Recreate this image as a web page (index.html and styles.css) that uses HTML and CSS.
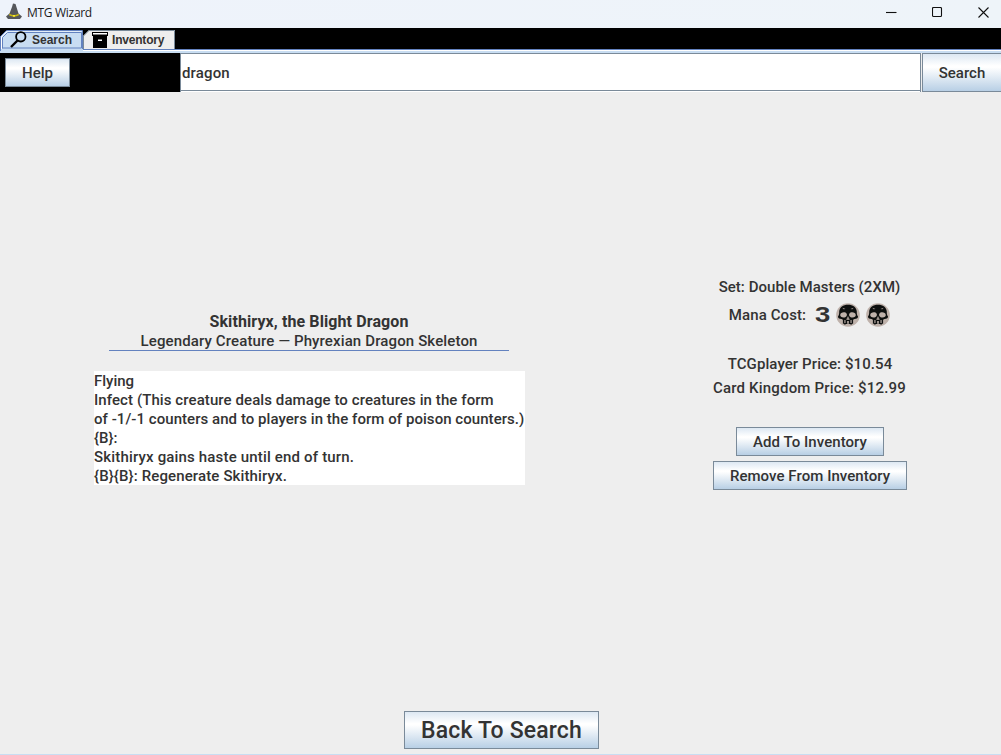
FILE: index.html
```html
<!DOCTYPE html>
<html lang="en">
<head>
<meta charset="utf-8">
<title>MTG Wizard</title>
<link rel="stylesheet" href="styles.css">
</head>
<body>
<svg class="defs" aria-hidden="true">
  <symbol id="skull" viewBox="0 0 24 24">
    <circle cx="12" cy="12" r="11.8" fill="#beb1aa"/>
    <path d="M12 1.800C7 1.800 3.600 4.500 3.200 8.500c0 1.800.1 3.200-1.200 5-.1 1.300.7 2 2.100 2.200 1.900.2 2.800.6 2.800 1.600v3.400h1.300l.5 1.200 1.200-1h4.200l1.200 1 .5-1.200h1.300v-3.400c0-1 .9-1.400 2.800-1.600 1.400-.2 2.200-.9 2.100-2.200-1.300-1.800-1.200-3.200-1.200-5C20.400 4.500 17 1.800 12 1.800z" fill="#0d0f0f"/>
    <path d="M4.200 12c0-2.700 4.700-3.600 6.300-1.600 1.300 1.900-.5 4-2.800 4.100-2.100.1-3.500-.9-3.500-2.500zM19.800 12c0-2.700-4.700-3.600-6.300-1.600-1.300 1.900.5 4 2.800 4.100 2.100.1 3.500-.9 3.500-2.500zM11.800 13l-1.500 3.700 1.500.3zM12.200 13l1.500 3.700-1.500.3zM8.400 17h1.100v3H8.400zM11.200 18h1.600v2.800h-1.600zM14.500 17h1.100v3h-1.100zM6.300 4.700l3.200 1.300-1.800.2zM17.700 4.700L14.500 6l1.800.2z" fill="#beb1aa"/>
  </symbol>
</svg>
<div class="window">
  <header class="titlebar">
    <svg class="hat" width="16" height="17" viewBox="0 0 16 17">
      <path d="M7 .5L9.500 1l3 9.500 3.500 3-2 2.500H2l-2-2.500 3.500-3L6 4z" fill="#55575b"/>
      <path d="M3.500 10.800q4.500 2.400 9 0l.5 1.500q-5 2.800-10 0z" fill="#c8b815"/>
      <path d="M7 12h2v1.700H7z" fill="#f5e82a"/>
    </svg>
    <span class="title">MTG Wizard</span>
    <div class="controls">
      <svg width="11" height="11" viewBox="0 0 11 11"><path d="M0 5.500h10.500"/></svg>
      <svg width="11" height="11" viewBox="0 0 11 11"><rect x=".5" y=".5" width="9" height="9" rx="1"/></svg>
      <svg width="11" height="11" viewBox="0 0 11 11"><path d="M.5.5l10 10M10.500.5l-10 10"/></svg>
    </div>
  </header>
  <nav class="tabs">
    <div class="tab search-tab">
      <svg class="tab-bg" width="83" height="21" viewBox="0 0 83 21"><path d="M0 21V7l6-6h77v20z" fill="#c8ddf2"/><path d="M.5 21V6.500l6-6H82.500V19" fill="none" stroke="#6382bf"/><path d="M1.500 19V7l5-5H81" fill="none" stroke="#fff"/><path d="M2.500 18.500V7.500l5-5h74v15.500H2.500" fill="none" stroke="#6382bf"/></svg>
      <svg class="magnifier" width="17" height="17" viewBox="0 0 17 17"><circle cx="10.800" cy="5.800" r="4.700" fill="none" stroke="#000" stroke-width="1.800"/><path d="M7.500 9.500L1 16" fill="none" stroke="#000" stroke-width="2.400"/></svg>
      <span class="tab-text t-search">Search</span>
    </div>
    <div class="tab inventory-tab">
      <svg class="tab-bg" width="92" height="19" viewBox="0 0 92 19"><path d="M0 19V6l6-6h86v19z" fill="#eee"/><path d="M.5 19V6l5.500-5.500h85.500V19" fill="none" stroke="#7a8a99"/></svg>
      <svg class="archive" width="16" height="16" viewBox="0 0 16 16"><path d="M0 0h16v4H0zM1 4h14v12H1z"/><path d="M1 1h14v1.500H1zM6 7.500h4V9H6z" fill="#fff"/></svg>
      <span class="tab-text t-inventory">Inventory</span>
    </div>
  </nav>
  <div class="toolbar">
    <div class="help-wrap"><button class="btn help"><span class="t-help">Help</span></button></div>
    <div class="field"><span class="t-dragon">dragon</span></div>
    <button class="btn go"><span class="t-go">Search</span></button>
  </div>
  <main class="content">
    <section class="card">
      <div class="card-head">
        <div class="name">Skithiryx, the Blight Dragon</div>
        <div class="type">Legendary Creature — Phyrexian Dragon Skeleton</div>
      </div>
      <div class="rules">
        <div><span class="r1">Flying</span></div>
        <div><span class="r2">Infect (This creature deals damage to creatures in the form</span></div>
        <div><span class="r3">of -1/-1 counters and to players in the form of poison counters.)</span></div>
        <div><span class="r4">{B}:</span></div>
        <div><span class="r5">Skithiryx gains haste until end of turn.</span></div>
        <div><span class="r6">{B}{B}: Regenerate Skithiryx.</span></div>
      </div>
    </section>
    <aside class="details">
      <div class="set">Set: Double Masters (2XM)</div>
      <div class="mana"><span class="mana-label">Mana Cost:</span><span class="three">3</span><svg class="pip" width="24" height="24"><use href="#skull"/></svg><svg class="pip" width="24" height="24"><use href="#skull"/></svg></div>
      <div class="tcg">TCGplayer Price: $10.54</div>
      <div class="kingdom">Card Kingdom Price: $12.99</div>
      <button class="btn add"><span class="t-add">Add To Inventory</span></button>
      <button class="btn remove"><span class="t-remove">Remove From Inventory</span></button>
    </aside>
  </main>
  <footer class="footer"><button class="btn back"><span class="t-back">Back To Search</span></button></footer>
</div>
</body>
</html>
```
FILE: styles.css
```css
* { box-sizing: border-box; }
body { margin: 0; background: #eee; }
.defs { position: absolute; width: 0; height: 0; }
.window {
  width: 1001px; height: 755px; display: flex; flex-direction: column; overflow: hidden;
  background: #eee; color: #333; border-bottom: 1px solid #c8ddf2;
  font: 500 15px/19px Roboto, "Liberation Sans", sans-serif; white-space: nowrap;
}
.titlebar { height: 28px; flex: none; display: flex; align-items: center; padding: 0 12px 0 6px; background: linear-gradient(90deg, #eef3fb, #eef4f9); }
.hat { margin-top: -5px; }
.title { margin: -3px auto 0 5px; color: #1b1b1b; font: 12px "Open Sans", sans-serif; letter-spacing: -.3px; }
.controls { display: flex; gap: 35px; margin-top: -4px; }
.controls svg { fill: none; stroke: #111; stroke-width: 1.100; }
.tabs { height: 25px; flex: none; display: flex; align-items: flex-start; padding-top: 2px; background: linear-gradient(#000 21px, #6382bf 21px 22px, #fff 22px 23px, #c8ddf2 23px); }
.tab { position: relative; display: flex; align-items: center; height: 19px; }
.search-tab { width: 83px; padding-left: 10px; }
.inventory-tab { width: 92px; padding-left: 9px; }
.tab-bg { position: absolute; left: 0; top: 0; }
.magnifier, .archive, .tab-text { position: relative; }
.archive { margin-top: 1px; }
.tab-text { font: bold 12px/19px "Liberation Sans", sans-serif; padding-top: 1px; }
.t-search { margin-left: 5px; }
.t-inventory { margin-left: 4px; letter-spacing: -.2px; }
.toolbar { height: 39px; flex: none; display: flex; background: #eee; }
.help-wrap { flex: none; width: 180px; padding: 5px; background: #000; }
.btn {
  display: flex; flex: none; align-items: center; justify-content: center; padding: 2px 0 0; color: #333; font: inherit;
  border: 1px solid #7a8a99; border-radius: 0; background: linear-gradient(#dde8f3 0, #fff 32%, #fff 36%, #b8cfe5 100%);
}
.help { width: 65px; height: 29px; }
.field { flex: none; width: 741px; height: 39px; display: flex; align-items: center; padding-left: 1px; background: #fff; border: 1px solid #7a8a99; border-bottom: 0; box-shadow: inset 0 -1px #fff, inset 0 -2px #7a8a99; }
.t-dragon { letter-spacing: .15px; }
.go { width: 81px; height: 39px; margin-left: 1px; padding-right: 1px; }
.content { flex: 1; display: flex; min-height: 0; }
.card { width: 431px; margin: 220px 0 0 94px; }
.card-head { width: 400px; height: 39px; padding-top: 1px; margin-left: 15px; text-align: center; border-bottom: 1px solid #6382bf; }
.name { margin: -1px 0 1px; font-weight: 700; font-size: 16px; letter-spacing: .1px; }
.type { letter-spacing: .13px; }
.rules { margin-top: 20px; height: 114px; padding-top: 1px; background: #fff; }
.r2 { letter-spacing: .085px; }
.r3 { letter-spacing: .05px; }
.r5 { letter-spacing: .17px; }
.r6 { letter-spacing: .13px; }
.details { width: 220px; margin: 186px 0 0 175px; display: flex; flex-direction: column; align-items: center; }
.set { letter-spacing: .04px; padding-right: 1px; }
.mana { height: 24px; display: flex; align-items: center; margin: 6px 1px 0 0; }
.mana-label { letter-spacing: .1px; }
.three { width: 15px; margin: 0 6px 0 9px; font: bold 22px/24px "Liberation Sans", sans-serif; transform: scaleX(1.25); transform-origin: left; }
.pip + .pip { margin-left: 6px; }
.tcg { margin-top: 28px; letter-spacing: .09px; }
.kingdom { margin-top: 5px; letter-spacing: .19px; padding-right: 1px; }
.add { width: 148px; height: 29px; margin-top: 29px; }
.t-add, .t-remove { letter-spacing: .06px; }
.remove { width: 194px; height: 29px; margin-top: 5px; }
.footer { height: 43px; flex: none; padding-left: 404px; }
.back { width: 195px; height: 38px; padding-top: 0; font-size: 23px; letter-spacing: .15px; }
```
